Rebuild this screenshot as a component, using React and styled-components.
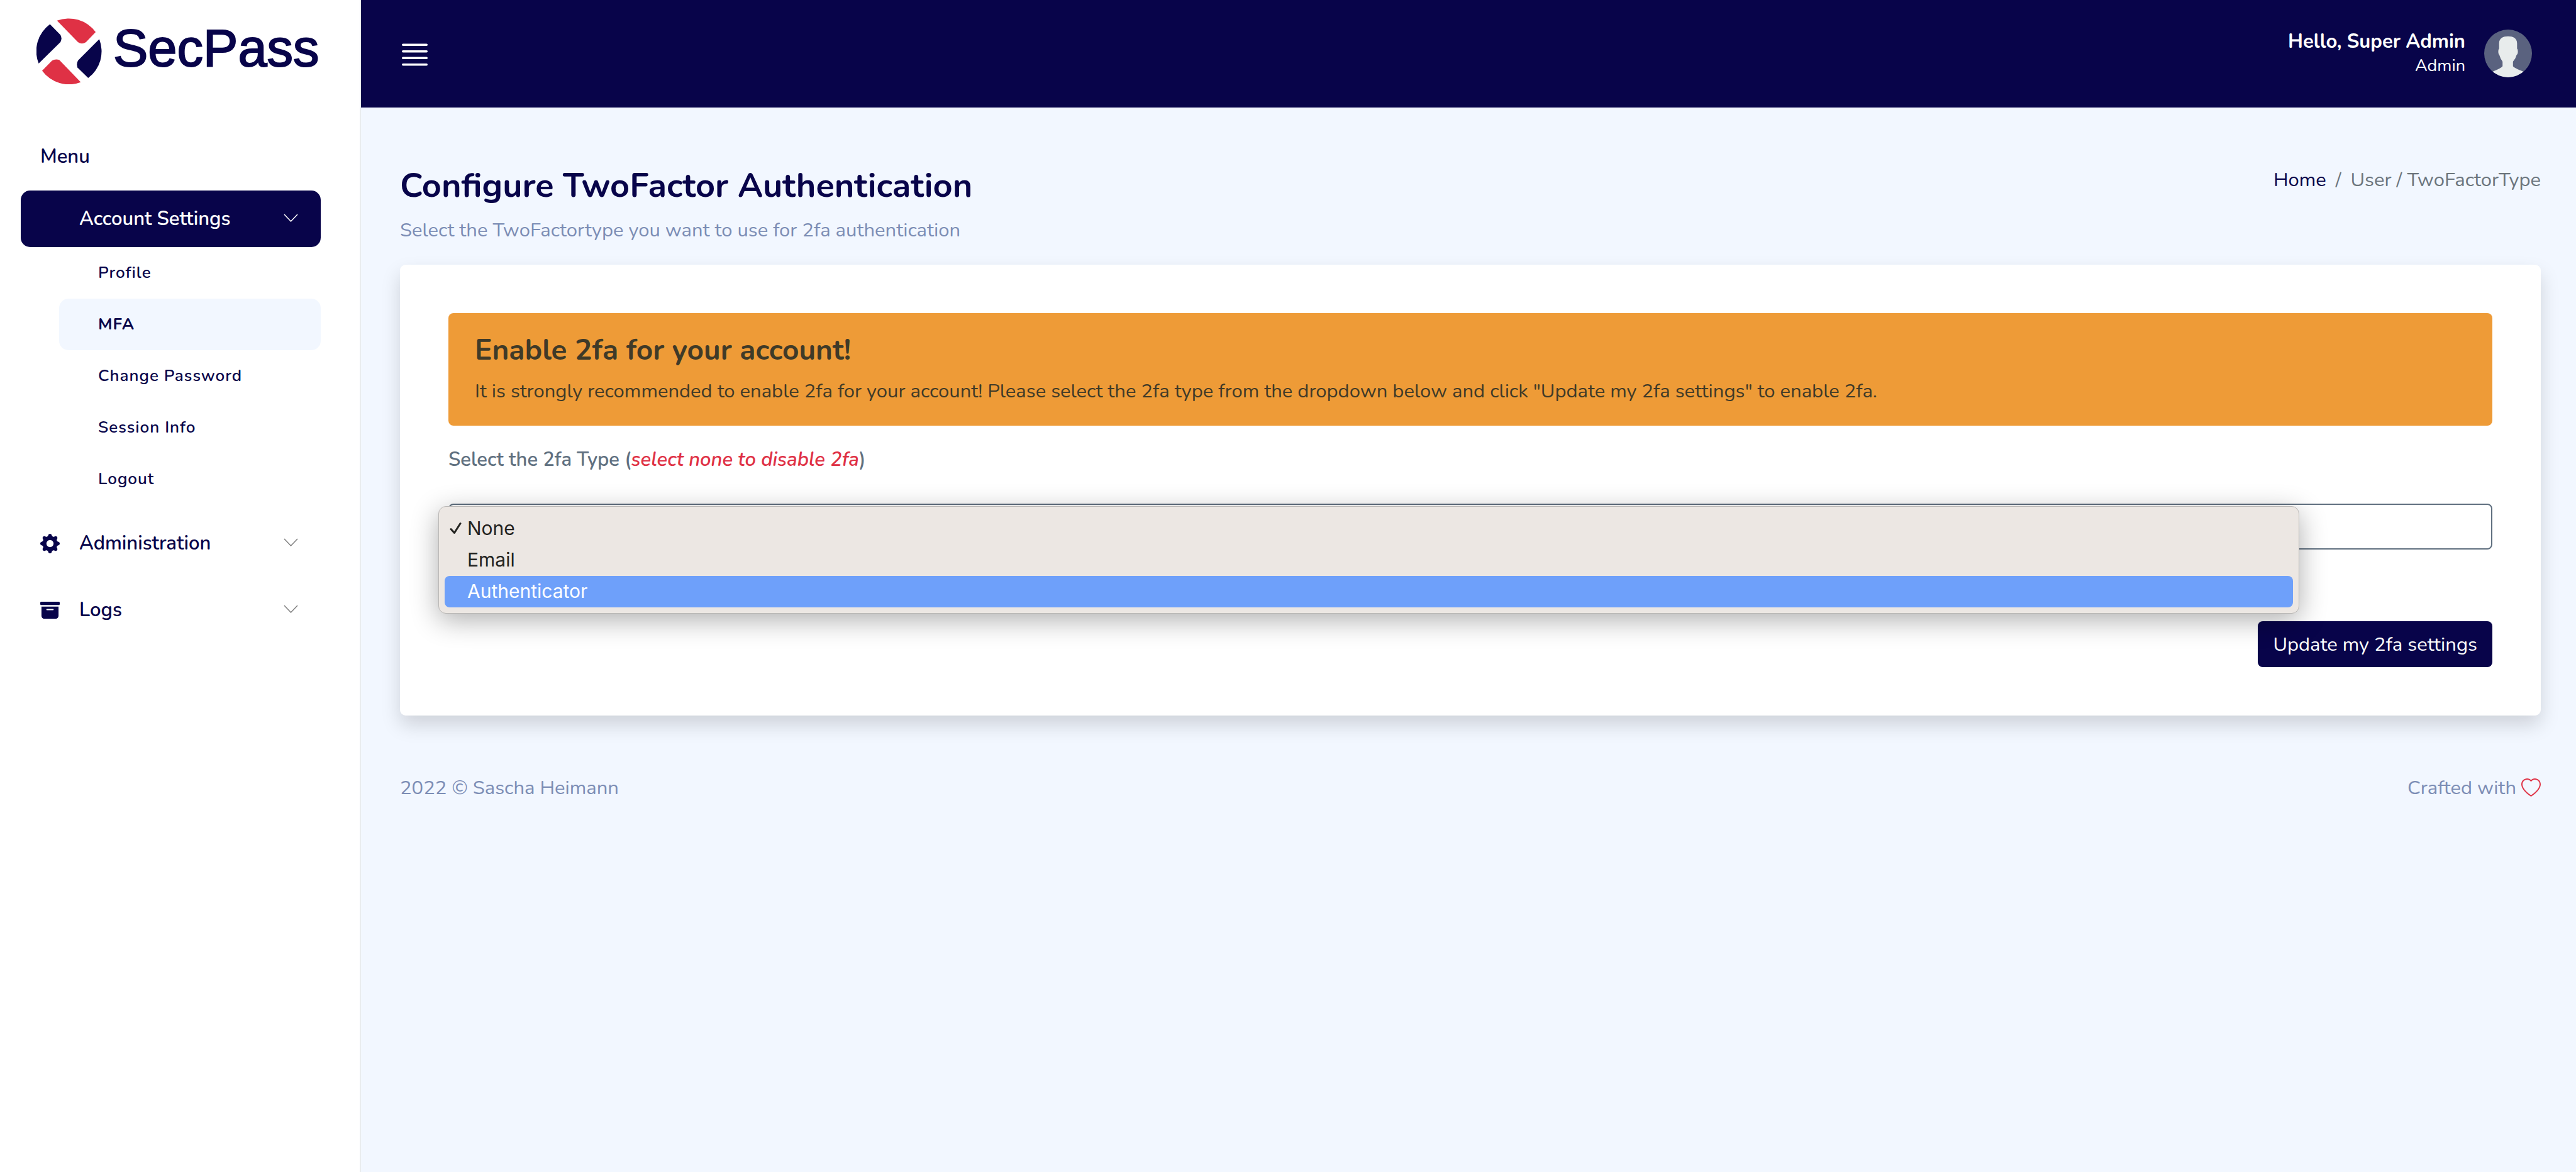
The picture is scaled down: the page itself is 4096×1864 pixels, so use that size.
import React from 'react';
import styled, { createGlobalStyle, css } from 'styled-components';
import { BsArchiveFill, BsGearFill, BsHeart } from 'react-icons/bs';

const color = {
  navy: '#08044a',
  page: '#f2f7ff',
  muted: '#7c8db5',
  slate: '#607080',
  crumb: '#6c757d',
  red: '#df3145',
  orange: '#ee9b37',
  olive: '#3f3a28',
};

const GlobalStyle = createGlobalStyle`
  *, *::before, *::after { box-sizing: border-box; }
  body {
    margin: 0;
    background: ${color.page};
    color: ${color.slate};
    font: 400 31px/46px Nunito, "Nunito Sans", Lato, sans-serif;
  }
  h1, h2, p, ul, ol { margin: 0; padding: 0; }
  ul, ol { list-style: none; }
  a { color: inherit; text-decoration: none; }
  button, select { font: inherit; }
`;

const Shell = styled.div`
  display: flex;
  min-height: 100vh;
`;

/* Sidebar */

const Sidebar = styled.aside`
  flex: none;
  width: 574px;
  padding: 29px 62px 40px 33px;
  background: #fff;
  border-right: 2px solid #e9ecef;
  color: ${color.navy};
`;

const Brand = styled.a`
  display: flex;
  align-items: center;
  gap: 18px;
  height: 105px;
  margin: 0 0 92px 25px;
`;

const BrandMark = styled.svg`
  width: 104px;
  height: 105px;
`;

const BrandName = styled.span`
  padding-bottom: 10px;
  font: 400 83px/95px "Liberation Sans", Arial, sans-serif;
  -webkit-text-stroke: 2px ${color.navy};
`;

const MenuTitle = styled.p`
  margin: 0 0 31px 31px;
  font-weight: 600;
`;

const MenuList = styled.ul`
  display: flex;
  flex-direction: column;
  gap: 16px;
`;

const MenuButton = styled.button`
  display: flex;
  align-items: center;
  gap: 31px;
  width: 100%;
  height: 90px;
  padding: 0 36px 0 31px;
  border: 0;
  border-radius: 15px;
  background: ${(p) => (p.$active ? color.navy : 'transparent')};
  color: ${(p) => (p.$active ? '#fff' : color.navy)};
  font-weight: 600;
  text-align: left;
  cursor: pointer;
`;

const IconSlot = styled.span`
  display: flex;
  width: 31px;
  height: 31px;
  font-size: 31px;
`;

const MenuLabel = styled.span`
  flex: 1;
`;

const ChevronIcon = styled.svg`
  width: 23px;
  height: 13px;
  margin-bottom: 4px;
  fill: none;
  stroke: ${(p) => (p.$light ? '#fff' : '#808080')};
  stroke-width: 1.5;
`;

const SubList = styled.ul`
  padding-left: 61px;
`;

const SubLink = styled.a`
  display: flex;
  align-items: center;
  height: 82px;
  padding-left: 62px;
  border-radius: 15px;
  font-size: 26px;
  font-weight: 600;
  letter-spacing: 1px;
  ${(p) =>
    p.$current &&
    css`
      background: ${color.page};
      font-weight: 700;
    `}
`;

/* Main column */

const Main = styled.div`
  flex: 1;
  min-width: 0;
`;

const TopBar = styled.header`
  display: flex;
  align-items: center;
  justify-content: space-between;
  height: 171px;
  padding: 0 70px 2px 65px;
  background: ${color.navy};
  color: #fff;
`;

const BurgerButton = styled.button`
  display: flex;
  padding: 4px 0 0;
  border: 0;
  background: none;
  cursor: pointer;
`;

const BurgerIcon = styled.svg`
  width: 41px;
  height: 36px;
  fill: #fff;
`;

const UserMenu = styled.a`
  display: flex;
  align-items: center;
  gap: 30px;
  text-align: right;
`;

const UserName = styled.p`
  font-weight: 700;
  line-height: 40px;
`;

const UserRole = styled.p`
  font-size: 27px;
  line-height: 37px;
`;

const Avatar = styled.svg`
  width: 76px;
  height: 76px;
  border-radius: 50%;
`;

const Content = styled.div`
  padding: 92px 56px 92px 62px;
`;

const PageHead = styled.div`
  display: flex;
  justify-content: space-between;
  align-items: flex-start;
  margin-bottom: 32px;
`;

const PageTitle = styled.h1`
  margin-bottom: 15px;
  color: ${color.navy};
  font-size: 54px;
  font-weight: 700;
  line-height: 65px;
`;

const PageLead = styled.p`
  color: ${color.muted};
`;

const Crumbs = styled.ol`
  display: flex;
  gap: 15px;
  color: ${color.crumb};
`;

const CrumbLink = styled.a`
  color: ${color.navy};
`;

const Card = styled.section`
  padding: 77px;
  border-radius: 9px;
  background: #fff;
  box-shadow: 0 15px 31px rgba(0, 0, 0, 0.15);
`;

const Alert = styled.div`
  margin-bottom: 31px;
  padding: 31px 42px 32px;
  border-radius: 8px;
  background: ${color.orange};
  color: ${color.olive};
`;

const AlertTitle = styled.h2`
  margin-bottom: 15px;
  font-size: 46px;
  font-weight: 700;
  line-height: 55px;
`;

const FieldLabel = styled.label`
  display: block;
  margin-bottom: 47px;
  font-weight: 600;
`;

const Hint = styled.em`
  color: ${color.red};
`;

const SelectWrap = styled.div`
  position: relative;
  margin-bottom: 114px;
`;

const Select = styled.select`
  display: block;
  width: 100%;
  height: 73px;
  padding: 0 23px;
  appearance: none;
  border: 2px solid ${color.slate};
  border-radius: 8px;
  background: #fff;
  color: ${color.slate};
`;

const Popup = styled.ul`
  position: absolute;
  z-index: 1;
  top: 4px;
  left: -16px;
  right: 307px;
  padding: 10px 9px 9px;
  border: 1px solid #b9b7b5;
  border-radius: 12px;
  background: #ece7e3;
  box-shadow: 0 10px 44px rgba(0, 0, 0, 0.32);
  color: #232320;
  font: 400 30px/48px Inter, Roboto, sans-serif;
`;

const PopupOption = styled.li`
  display: flex;
  align-items: center;
  height: 50px;
  padding: 0 9px 2px 8px;
  border-radius: 8px;
  ${(p) =>
    p.$highlighted &&
    css`
      background: #6ea0fa;
      color: #fff;
    `}
`;

const CheckSlot = styled.span`
  display: flex;
  width: 28px;
`;

const CheckIcon = styled.svg`
  width: 20px;
  height: 20px;
  fill: none;
  stroke: currentColor;
  stroke-width: 3;
  stroke-linecap: round;
  stroke-linejoin: round;
`;

const FormActions = styled.div`
  display: flex;
  justify-content: flex-end;
`;

const SubmitButton = styled.button`
  height: 73px;
  padding: 0 24px;
  border: 0;
  border-radius: 8px;
  background: ${color.navy};
  color: #fff;
  cursor: pointer;
`;

const Footer = styled.footer`
  display: flex;
  justify-content: space-between;
  margin-top: 92px;
  color: ${color.muted};
`;

const Crafted = styled.p`
  display: flex;
  align-items: center;
  gap: 8px;

  svg {
    color: ${color.red};
  }
`;

function Chevron({ light }) {
  return (
    <ChevronIcon $light={light} viewBox="0 0 23 13" aria-hidden="true">
      <path d="M1 1 11.500 12 22 1" />
    </ChevronIcon>
  );
}

function LogoMark() {
  return (
    <BrandMark viewBox="29 29 325 328" aria-hidden="true">
      <path fill={color.red} d="M131 41 235 148Q255 162 275 148L323 98A165 165 0 0 0 131 41Z" />
      <path fill={color.navy} d="M96 59 148 112Q158 129 148 148L40 254A165 165 0 0 1 96 59Z" />
      <path fill={color.red} d="M57 290 106 240Q123 229 142 236L249 347A165 165 0 0 1 57 290Z" />
      <path fill={color.navy} d="M341 133 236 238Q226 254 233 274L286 326A165 165 0 0 0 341 133Z" />
    </BrandMark>
  );
}

function AvatarPicture() {
  return (
    <Avatar viewBox="39 27 234 234" role="img" aria-label="Super Admin">
      <rect x="39" y="27" width="234" height="234" fill="#5a627f" />
      <path
        fill="#e8ecec"
        d="M156 60C132 60 112 68 112 95V121Q108 123 108 138 109 149 113 151 118 170 129 184V206Q126 214 80 233V262H232V233Q184 214 180 206V184Q193 170 198 151 203 149 204 138 204 123 200 121V95C200 68 180 60 156 60Z"
      />
    </Avatar>
  );
}

const accountLinks = ['Profile', 'MFA', 'Change Password', 'Session Info', 'Logout'];
const factorTypes = ['None', 'Email', 'Authenticator'];

export default function App() {
  return (
    <>
      <GlobalStyle />
      <Shell>
        <Sidebar>
          <Brand href="#">
            <LogoMark />
            <BrandName>SecPass</BrandName>
          </Brand>
          <nav>
            <MenuTitle>Menu</MenuTitle>
            <MenuList>
              <li>
                <MenuButton type="button" $active aria-expanded="true">
                  <IconSlot />
                  <MenuLabel>Account Settings</MenuLabel>
                  <Chevron light />
                </MenuButton>
                <SubList>
                  {accountLinks.map((name) => (
                    <li key={name}>
                      <SubLink href="#" $current={name === 'MFA'}>
                        {name}
                      </SubLink>
                    </li>
                  ))}
                </SubList>
              </li>
              <li>
                <MenuButton type="button" aria-expanded="false">
                  <IconSlot>
                    <BsGearFill />
                  </IconSlot>
                  <MenuLabel>Administration</MenuLabel>
                  <Chevron />
                </MenuButton>
              </li>
              <li>
                <MenuButton type="button" aria-expanded="false">
                  <IconSlot>
                    <BsArchiveFill />
                  </IconSlot>
                  <MenuLabel>Logs</MenuLabel>
                  <Chevron />
                </MenuButton>
              </li>
            </MenuList>
          </nav>
        </Sidebar>

        <Main>
          <TopBar>
            <BurgerButton type="button" aria-label="Toggle menu">
              <BurgerIcon viewBox="0 0 41 36">
                {[0.5, 11, 21.5, 32].map((y) => (
                  <rect key={y} y={y} width="41" height="3.5" rx="1.75" />
                ))}
              </BurgerIcon>
            </BurgerButton>
            <UserMenu href="#">
              <div>
                <UserName>Hello, Super Admin</UserName>
                <UserRole>Admin</UserRole>
              </div>
              <AvatarPicture />
            </UserMenu>
          </TopBar>

          <Content>
            <PageHead>
              <div>
                <PageTitle>Configure TwoFactor Authentication</PageTitle>
                <PageLead>Select the TwoFactortype you want to use for 2fa authentication</PageLead>
              </div>
              <nav aria-label="Breadcrumb">
                <Crumbs>
                  <li>
                    <CrumbLink href="#">Home</CrumbLink>
                  </li>
                  <li aria-hidden="true">/</li>
                  <li>User / TwoFactorType</li>
                </Crumbs>
              </nav>
            </PageHead>

            <Card>
              <Alert role="alert">
                <AlertTitle>Enable 2fa for your account!</AlertTitle>
                <p>
                  It is strongly recommended to enable 2fa for your account! Please select the 2fa type from
                  the dropdown below and click "Update my 2fa settings" to enable 2fa.
                </p>
              </Alert>
              <form onSubmit={(event) => event.preventDefault()}>
                <FieldLabel htmlFor="factor-type">
                  Select the 2fa Type (<Hint>select none to disable 2fa</Hint>)
                </FieldLabel>
                <SelectWrap>
                  <Select id="factor-type" defaultValue="None">
                    {factorTypes.map((type) => (
                      <option key={type}>{type}</option>
                    ))}
                  </Select>
                  <Popup role="listbox" aria-label="2fa type">
                    {factorTypes.map((type) => (
                      <PopupOption
                        key={type}
                        role="option"
                        aria-selected={type === 'None'}
                        $highlighted={type === 'Authenticator'}
                      >
                        <CheckSlot>
                          {type === 'None' && (
                            <CheckIcon viewBox="0 0 20 20">
                              <path d="M2 11.500 7.500 17.500 17 2.500" />
                            </CheckIcon>
                          )}
                        </CheckSlot>
                        {type}
                      </PopupOption>
                    ))}
                  </Popup>
                </SelectWrap>
                <FormActions>
                  <SubmitButton type="submit">Update my 2fa settings</SubmitButton>
                </FormActions>
              </form>
            </Card>

            <Footer>
              <p>2022 © Sascha Heimann</p>
              <Crafted>
                Crafted with <BsHeart size={31} />
              </Crafted>
            </Footer>
          </Content>
        </Main>
      </Shell>
    </>
  );
}
